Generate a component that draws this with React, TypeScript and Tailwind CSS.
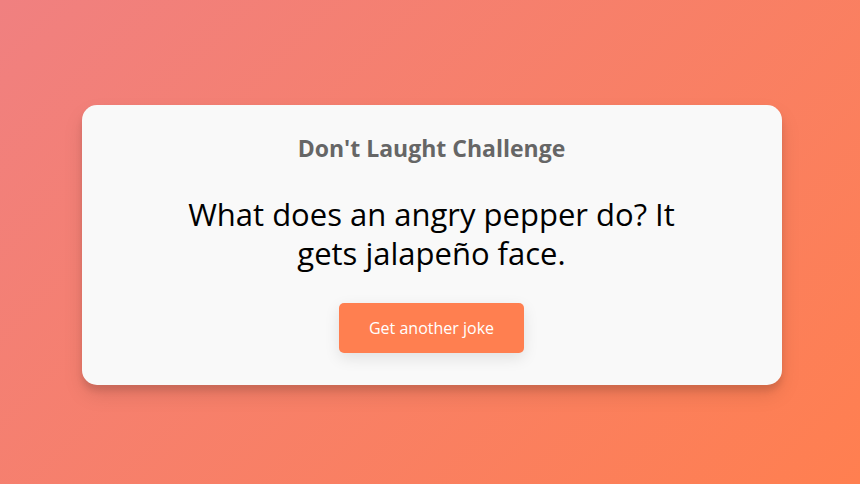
import * as React from 'react';

export default function App() {
  return (
    <div className="flex h-[484px] w-[860px] items-center justify-center bg-[linear-gradient(135deg,#f08080,#ff7f50)] pl-[3px] pt-[5px] font-['Open_Sans',sans-serif]">
      <div className="flex h-[280px] w-[700px] flex-col items-center rounded-[15px] bg-[#f9f9f9] px-5 pt-[28px] text-center shadow-[0_10px_20px_rgba(0,0,0,0.1),0_6px_6px_rgba(0,0,0,0.1)]">
        <h3 className="text-[23px] font-bold leading-[30px] text-[#666]">Don't Laught Challenge</h3>
        <p className="mt-[32px] max-w-[510px] text-[31px] leading-[39px] text-black">
          What does an angry pepper do? It gets jalapeño face.
        </p>
        <button className="mt-[30px] h-[50px] w-[185px] rounded-[5px] bg-[#ff7f50] text-[16px] text-white shadow-[0_5px_15px_rgba(0,0,0,0.1)]">
          Get another joke
        </button>
      </div>
    </div>
  );
}
